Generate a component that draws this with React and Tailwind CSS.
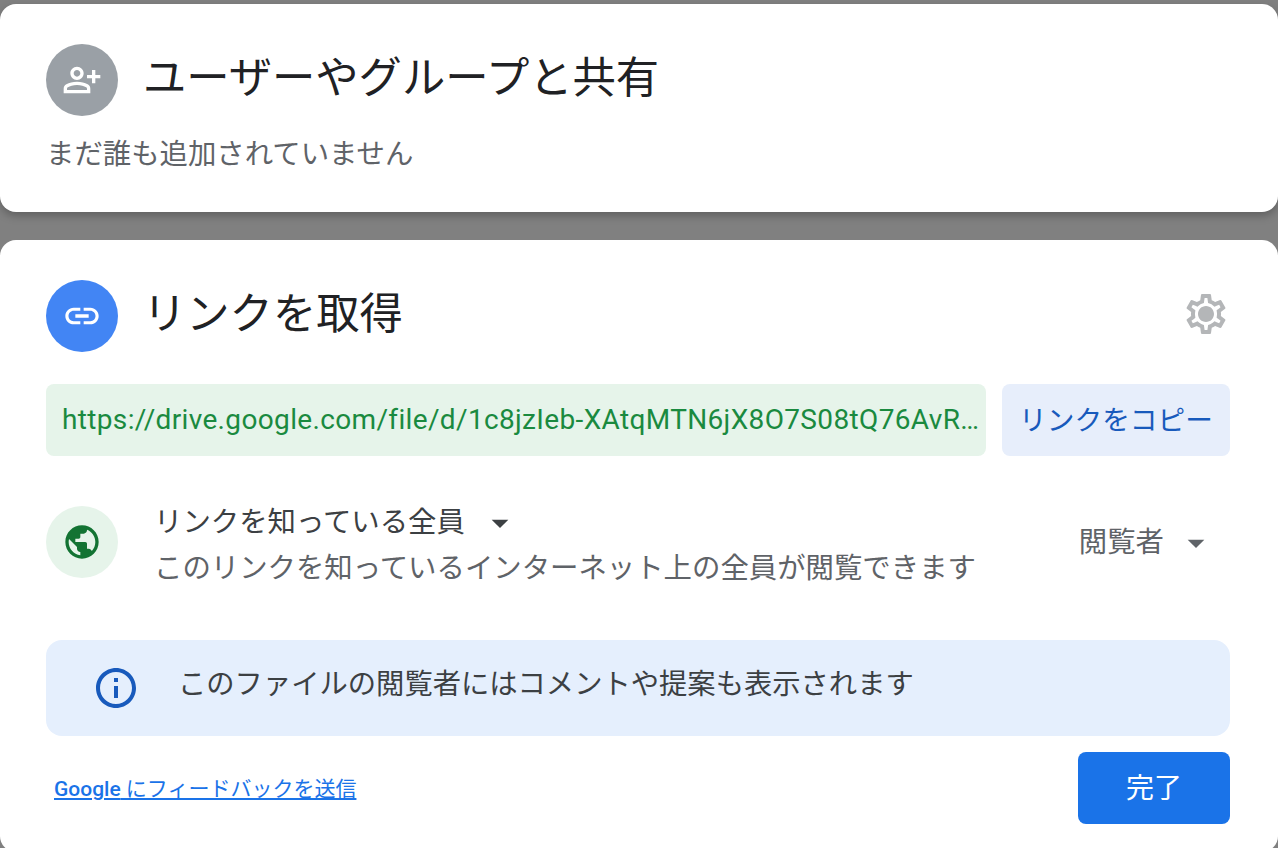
import React from "react";

const font = "[font-family:Roboto,'Noto_Sans_CJK_JP',sans-serif]";

function Icon({ d, className }) {
  return (
    <svg viewBox="0 0 24 24" className={className} fill="currentColor">
      <path d={d} />
    </svg>
  );
}

const personAdd =
  "M20 9V6h-2v3h-3v2h3v3h2v-3h3V9h-3zM9 12c2.21 0 4-1.79 4-4s-1.79-4-4-4-4 1.79-4 4 1.79 4 4 4zm0-6c1.1 0 2 .9 2 2s-.9 2-2 2-2-.9-2-2 .9-2 2-2zm6.39 8.56C13.71 13.7 11.53 13 9 13s-4.71.7-6.39 1.56C1.61 15.07 1 16.1 1 17.22V20h16v-2.78c0-1.12-.61-2.15-1.61-2.66zM15 18H3v-.78c0-.38.2-.72.52-.88C4.71 15.73 6.63 15 9 15c2.37 0 4.29.73 5.48 1.34.32.16.52.5.52.88V18z";
const link =
  "M3.9 12c0-1.71 1.39-3.1 3.1-3.1h4V7H7c-2.76 0-5 2.24-5 5s2.24 5 5 5h4v-1.9H7c-1.71 0-3.1-1.39-3.1-3.1zM8 13h8v-2H8v2zm9-6h-4v1.9h4c1.71 0 3.1 1.39 3.1 3.1s-1.39 3.1-3.1 3.1h-4V17h4c2.76 0 5-2.24 5-5s-2.24-5-5-5z";
const globe =
  "M12 2C6.48 2 2 6.48 2 12s4.48 10 10 10 10-4.48 10-10S17.52 2 12 2zm-1 17.93c-3.95-.49-7-3.85-7-7.93 0-.62.08-1.21.21-1.79L9 15v1c0 1.1.9 2 2 2v1.93zm6.9-2.54c-.26-.81-1-1.39-1.9-1.39h-1v-3c0-.55-.45-1-1-1H8v-2h2c.55 0 1-.45 1-1V7h2c1.1 0 2-.9 2-2v-.41c2.93 1.19 5 4.06 5 7.41 0 2.08-.8 3.97-2.1 5.39z";
const gear =
  "M19.43 12.98c.04-.32.07-.64.07-.98 0-.34-.03-.66-.07-.98l2.11-1.65c.19-.15.24-.42.12-.64l-2-3.46c-.09-.16-.26-.25-.44-.25-.06 0-.12.01-.17.03l-2.49 1c-.52-.4-1.08-.73-1.69-.98l-.38-2.65C14.46 2.18 14.25 2 14 2h-4c-.25 0-.46.18-.49.42l-.38 2.65c-.61.25-1.17.59-1.69.98l-2.49-1c-.06-.02-.12-.03-.18-.03-.17 0-.34.09-.43.25l-2 3.46c-.13.22-.07.49.12.64l2.11 1.65c-.04.32-.07.65-.07.98 0 .33.03.66.07.98l-2.11 1.65c-.19.15-.24.42-.12.64l2 3.46c.09.16.26.25.44.25.06 0 .12-.01.17-.03l2.49-1c.52.4 1.08.73 1.69.98l.38 2.65c.03.24.24.42.49.42h4c.25 0 .46-.18.49-.42l.38-2.65c.61-.25 1.17-.59 1.69-.98l2.49 1c.06.02.12.03.18.03.17 0 .34-.09.43-.25l2-3.46c.12-.22.07-.49-.12-.64l-2.11-1.65zm-1.98-1.71c.04.31.05.52.05.73 0 .21-.02.43-.05.73l-.14 1.13.89.7 1.08.84-.7 1.21-1.27-.51-1.04-.42-.9.68c-.43.32-.84.56-1.25.73l-1.06.43-.16 1.13-.2 1.35h-1.4l-.19-1.35-.16-1.13-1.06-.43c-.43-.18-.83-.41-1.23-.71l-.91-.7-1.06.43-1.27.51-.7-1.21 1.08-.84.89-.7-.14-1.13c-.03-.31-.05-.54-.05-.74s.02-.43.05-.73l.14-1.13-.89-.7-1.08-.84.7-1.21 1.27.51 1.04.42.9-.68c.43-.32.84-.56 1.25-.73l1.06-.43.16-1.13.2-1.35h1.39l.19 1.35.16 1.13 1.06.43c.43.18.83.41 1.23.71l.91.7 1.06-.43 1.27-.51.7 1.21-1.07.85-.89.7.14 1.13zM12 8c-2.21 0-4 1.79-4 4s1.79 4 4 4 4-1.79 4-4-1.79-4-4-4z";
const info =
  "M11 7h2v2h-2zm0 4h2v6h-2zm1-9C6.48 2 2 6.48 2 12s4.48 10 10 10 10-4.48 10-10S17.52 2 12 2zm0 18c-4.41 0-8-3.59-8-8s3.59-8 8-8 8 3.59 8 8-3.59 8-8 8z";
const caret = "M7 10l5 5 5-5z";

export default function App() {
  return (
    <div className={`h-[848px] w-[1278px] overflow-hidden bg-[#808080] pt-1 ${font}`}>
      {/* share with people */}
      <div className="h-[208px] rounded-2xl bg-white pl-[46px] pr-12 pt-10 shadow-[0_4px_8px_rgba(0,0,0,0.25)]">
        <div className="flex items-center gap-[25px]">
          <div className="flex h-[72px] w-[72px] items-center justify-center rounded-full bg-[#9aa0a6] text-white">
            <Icon d={personAdd} className="h-10 w-10" />
          </div>
          <h1 className="pb-[2px] text-[43.3px] leading-[68px] text-[#202124]">ユーザーやグループと共有</h1>
        </div>
        <p className="mt-[21px] text-[28.4px] leading-9 text-[#5f6368]">まだ誰も追加されていません</p>
      </div>

      {/* get link */}
      <div className="mt-7 h-[612px] rounded-2xl bg-white pl-[46px] pr-12 pt-10">
        <div className="flex items-center justify-between">
          <div className="flex items-center gap-[25px]">
            <div className="flex h-[72px] w-[72px] items-center justify-center rounded-full bg-[#4285f4] text-white">
              <Icon d={link} className="h-10 w-10" />
            </div>
            <h2 className="pb-[2px] text-[43.3px] leading-[68px] text-[#202124]">リンクを取得</h2>
          </div>
          <Icon d={gear} className="-mt-1 h-12 w-12 text-[#b4b6b8]" />
        </div>

        <div className="mt-8 flex gap-4">
          <div className="flex h-[72px] w-[940px] items-center rounded-lg bg-[#e6f4ea] pl-4">
            <span className="truncate text-[28px] tracking-[0.35px] text-[#1a8a3f]">
              https://drive.google.com/file/d/1c8jzIeb-XAtqMTN6jX8O7S08tQ76AvRxyz/view?usp=sharing
            </span>
          </div>
          <button className="flex h-[72px] flex-1 items-center justify-center rounded-lg bg-[#e7eefb] pt-[2px] text-[27.7px] text-[#185abc]">
            リンクをコピー
          </button>
        </div>

        <div className="mt-11 flex items-start">
          <div className="mt-[6px] flex h-[72px] w-[72px] shrink-0 items-center justify-center rounded-full bg-[#e6f4ea] text-[#137333]">
            <Icon d={globe} className="h-10 w-10" />
          </div>
          <div className="ml-9 flex-1">
            <div className="flex h-[46px] items-center text-[28.4px] text-[#3c4043]">
              リンクを知っている全員
              <Icon d={caret} className="ml-[15px] h-10 w-10 text-[#3c4043]" />
            </div>
            <div className="h-[46px] text-[28.4px] leading-[46px] text-[#5f6368]">
              このリンクを知っているインターネット上の全員が閲覧できます
            </div>
          </div>
          <div className="mt-[22px] flex items-center text-[28.4px] text-[#5f6368]">
            閲覧者
            <Icon d={caret} className="ml-3 mr-[14px] h-10 w-10" />
          </div>
        </div>

        <div className="mt-12 flex h-24 items-center gap-[38px] rounded-2xl bg-[#e5effd] pl-[46px]">
          <Icon d={info} className="h-12 w-12 text-[#185abc]" />
          <p className="pb-[6px] text-[28.3px] text-[#3c4043]">このファイルの閲覧者にはコメントや提案も表示されます</p>
        </div>

        <div className="mt-4 flex items-center justify-between">
          <a className="ml-2 mt-1 text-[21px] text-[#1a73e8] underline">
            <span className="font-medium">Google</span> にフィードバックを送信
          </a>
          <button className="h-[72px] w-[152px] rounded-lg bg-[#1a73e8] pt-[2px] text-[28px] text-white">完了</button>
        </div>
      </div>
    </div>
  );
}
